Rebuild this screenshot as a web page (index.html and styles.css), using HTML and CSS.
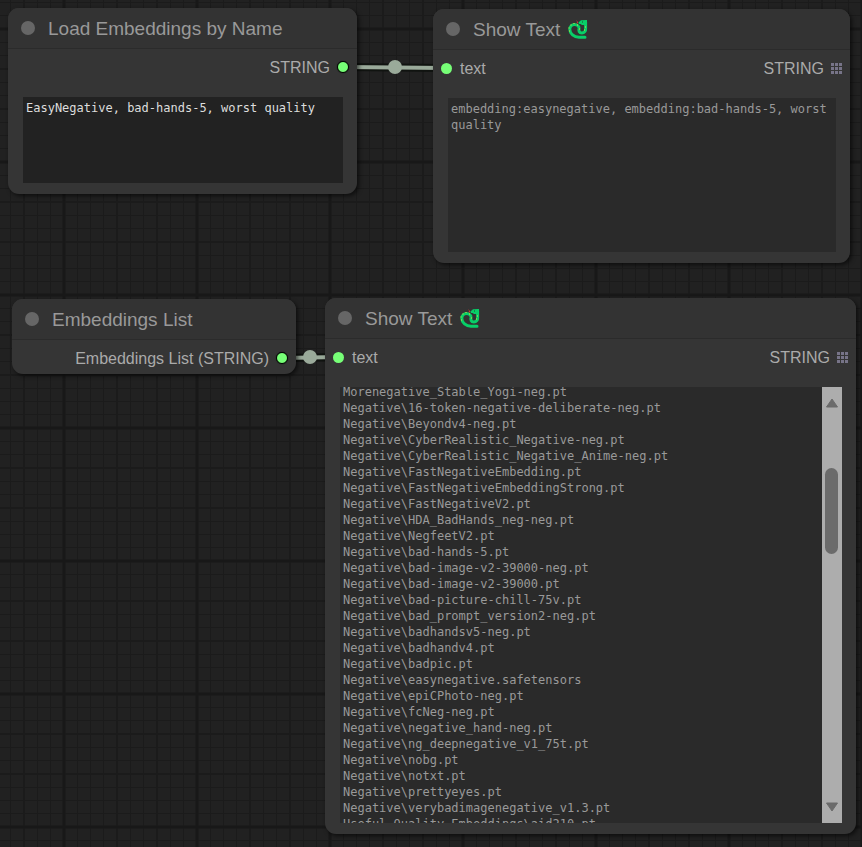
FILE: index.html
```html
<!DOCTYPE html>
<html lang="en">
<head>
<meta charset="utf-8">
<meta name="viewport" content="width=device-width, initial-scale=1">
<title>Embeddings workflow</title>
<link rel="stylesheet" href="styles.css">
</head>
<body>
<main class="canvas">
  <svg class="layer" aria-hidden="true">
    <defs>
      <pattern id="grid" x="64" y="29" width="133" height="133" patternUnits="userSpaceOnUse">
        <path class="grid-minor" d="M13.5 0v133M26.5 0v133M39.5 0v133M66.5 0v133M79.5 0v133M106.5 0v133M119.5 0v133M0 13.5h133M0 26.5h133M0 53.5h133M0 66.5h133M0 93.5h133M0 106.5h133M0 119.5h133"/>
        <path class="grid-medium" d="M53 0v133M93 0v133M0 40h133M0 80h133"/>
        <path class="grid-major" d="M0 0v133M133 0v133M0 0h133M0 133h133"/>
      </pattern>
      <symbol id="snake" viewBox="0 0 20 20">
        <path class="snake-body" d="M17 18.200H11C6 18.200 1.800 14.500 1.800 10.500C1.800 7.500 4 5.500 6.500 5.500C9.500 5.500 11.200 7.500 11 9.500C10.500 11.500 11 14 13.800 14C16.500 14 17.800 12 17.600 9.500V3"/>
        <path class="snake-head" d="M19 1v5h-5l-1.500-1H11l-.6-1.500L13 1.300z"/>
        <path class="snake-tongue" d="M8.600 2l1.200 1.200-1 .8 1.200-.5"/>
        <path class="snake-spots" d="M1 12h1M.5 9h1M2.500 6h1M5.500 4.500h1M9 6h1M11 10h1M16 11h1M17 8h1"/>
        <path class="snake-eye" d="M14 3h1"/>
      </symbol>
      <symbol id="dots" viewBox="0 0 11 11">
        <path class="dots-fill" d="M0 0h3v3H0zM4 0h3v3H4zM8 0h3v3H8zM0 4h3v3H0zM4 4h3v3H4zM8 4h3v3H8zM0 8h3v3H0zM4 8h3v3H4zM8 8h3v3H8z"/>
      </symbol>
    </defs>
    <rect width="100%" height="100%" fill="url(#grid)"/>
    <path class="link-edge" d="M344 67L446 68M283 358L339 357"/>
    <path class="link" d="M344 67L446 68M283 358L339 357"/>
    <circle class="link-knob" cx="395" cy="67" r="7"/>
    <circle class="link-knob" cx="310" cy="357" r="7"/>
  </svg>

  <section class="node node-load">
    <header class="node-header"><span class="node-dot"></span><h2 class="node-title">Load Embeddings by Name</h2></header>
    <div class="slots"><span class="slot slot-out"><span class="slot-label">STRING</span><span class="port port-linked"></span></span></div>
    <div class="field"><textarea class="text text-edit" aria-label="Embedding names" spellcheck="false">EasyNegative, bad-hands-5, worst quality</textarea></div>
  </section>

  <section class="node node-show">
    <header class="node-header"><span class="node-dot"></span><h2 class="node-title">Show Text</h2><svg class="snake" aria-hidden="true"><use href="#snake"/></svg></header>
    <div class="slots">
      <span class="slot"><span class="port"></span><span class="slot-label">text</span></span>
      <span class="slot slot-out"><span class="slot-label">STRING</span><svg class="dots" aria-hidden="true"><use href="#dots"/></svg></span>
    </div>
    <div class="field"><textarea class="text" aria-label="Resolved embeddings" readonly>embedding:easynegative, embedding:bad-hands-5, worst quality</textarea></div>
  </section>

  <section class="node node-list">
    <header class="node-header"><span class="node-dot"></span><h2 class="node-title">Embeddings List</h2></header>
    <div class="slots"><span class="slot slot-out"><span class="slot-label">Embeddings List (STRING)</span><span class="port port-linked"></span></span></div>
  </section>

  <section class="node node-files">
    <header class="node-header"><span class="node-dot"></span><h2 class="node-title">Show Text</h2><svg class="snake" aria-hidden="true"><use href="#snake"/></svg></header>
    <div class="slots">
      <span class="slot"><span class="port"></span><span class="slot-label">text</span></span>
      <span class="slot slot-out"><span class="slot-label">STRING</span><svg class="dots" aria-hidden="true"><use href="#dots"/></svg></span>
    </div>
    <div class="field">
      <textarea class="text text-files" id="files" aria-label="Embedding files" readonly wrap="off">Morenegative_Stable_Yogi-neg.pt
Negative\16-token-negative-deliberate-neg.pt
Negative\Beyondv4-neg.pt
Negative\CyberRealistic_Negative-neg.pt
Negative\CyberRealistic_Negative_Anime-neg.pt
Negative\FastNegativeEmbedding.pt
Negative\FastNegativeEmbeddingStrong.pt
Negative\FastNegativeV2.pt
Negative\HDA_BadHands_neg-neg.pt
Negative\NegfeetV2.pt
Negative\bad-hands-5.pt
Negative\bad-image-v2-39000-neg.pt
Negative\bad-image-v2-39000.pt
Negative\bad-picture-chill-75v.pt
Negative\bad_prompt_version2-neg.pt
Negative\badhandsv5-neg.pt
Negative\badhandv4.pt
Negative\badpic.pt
Negative\easynegative.safetensors
Negative\epiCPhoto-neg.pt
Negative\fcNeg-neg.pt
Negative\negative_hand-neg.pt
Negative\ng_deepnegative_v1_75t.pt
Negative\nobg.pt
Negative\notxt.pt
Negative\prettyeyes.pt
Negative\verybadimagenegative_v1.3.pt
Useful_Quality_Embeddings\aid210.pt</textarea>
      <div class="scrollbar" aria-hidden="true">
        <svg class="arrow" viewBox="0 0 12 10"><path d="M6 1L11.500 9H.5z"/></svg>
        <div class="track"><div class="thumb"></div></div>
        <svg class="arrow" viewBox="0 0 12 10"><path d="M6 9L11.500 1H.5z"/></svg>
      </div>
    </div>
  </section>
</main>
<script src="script.js"></script>
</body>
</html>
```

FILE: styles.css
```css
* {
  box-sizing: border-box;
}

body {
  margin: 0;
  background: #212121;
  font-family: "Liberation Sans", Arial, sans-serif;
}

.canvas {
  position: relative;
  height: 100vh;
  overflow: hidden;
}

.layer {
  position: absolute;
  inset: 0;
  width: 100%;
  height: 100%;
}

.grid-minor {
  stroke: #1b1b1b;
  stroke-width: 1;
}

.grid-medium {
  stroke: #1b1b1b;
  stroke-width: 2;
}

.grid-major {
  stroke: #181818;
  stroke-width: 3;
}

.link-edge {
  stroke: #101310;
  stroke-width: 8;
}

.link {
  stroke: #9aaa9a;
  stroke-width: 4;
}

.link-knob {
  fill: #9aaa9a;
}

/* Nodes sit freely on the canvas */
.node {
  position: absolute;
  display: flex;
  flex-direction: column;
  border-radius: 11px;
  background: #353535;
  box-shadow: 2px 2px 4px rgba(0, 0, 0, 0.6);
}

.node-load {
  left: 8px;
  top: 8px;
  width: 349px;
  height: 186px;
}

.node-show {
  left: 433px;
  top: 9px;
  width: 417px;
  height: 254px;
}

.node-list {
  left: 12px;
  top: 299px;
  width: 284px;
}

.node-files {
  left: 325px;
  top: 298px;
  width: 531px;
  height: 536px;
}

.node-header {
  display: flex;
  align-items: center;
  height: 41px;
  padding-left: 13px;
  border-bottom: 1px solid #2b2b2b;
  border-radius: 11px 11px 0 0;
  background: #333333;
}

.node-dot {
  width: 14px;
  height: 14px;
  margin-right: 13px;
  border-radius: 50%;
  background: #666666;
}

.node-title {
  margin: 0;
  padding-top: 2px;
  font-size: 19px;
  font-weight: 400;
  line-height: 24px;
  color: #999999;
}

.snake {
  width: 20px;
  height: 20px;
  margin-left: 8px;
}

.snake-body {
  fill: none;
  stroke: #08cf68;
  stroke-width: 3;
  stroke-linecap: round;
}

.snake-head {
  fill: #08cf68;
}

.snake-tongue {
  fill: none;
  stroke: #d8363c;
}

.snake-spots {
  stroke: #e5d736;
}

.snake-eye {
  stroke: #14532d;
}

.slots {
  display: flex;
  align-items: center;
  height: 34px;
  padding: 2px 8px 0;
}

.slot {
  display: flex;
  align-items: center;
  gap: 8px;
}

.slot-out {
  gap: 7px;
  margin-left: auto;
}

.slot-label {
  padding-top: 2px;
  font-size: 16px;
  line-height: 20px;
  color: #aaaaaa;
}

.port {
  width: 11px;
  height: 11px;
  border-radius: 50%;
  background: #77ff77;
}

.port-linked {
  width: 12px;
  height: 12px;
  border: 1px solid #000000;
  box-shadow: 0 0 1px #000000;
}

.dots {
  width: 11px;
  height: 11px;
}

.dots-fill {
  fill: #777488;
}

.field {
  display: flex;
  flex: 1;
  min-height: 0;
  padding: 14px 14px 11px 15px;
}

.text {
  flex: 1;
  min-width: 0;
  padding: 3px;
  border: 0;
  outline: 0;
  resize: none;
  overflow: hidden;
  background: #2a2a2a;
  color: #999999;
  font-family: "DejaVu Sans Mono", monospace;
  font-size: 12px;
  line-height: 16px;
}

.text-edit {
  background: #222222;
  color: #dddddd;
}

.text-files {
  white-space: pre;
}

.scrollbar {
  display: flex;
  flex-direction: column;
  align-items: center;
  width: 20px;
  padding: 11px 1px 11px 0;
  background: #adadad;
}

.arrow {
  width: 12px;
  height: 10px;
  fill: #6b6b6b;
  stroke: #6b6b6b;
  stroke-linejoin: round;
}

.track {
  flex: 1;
  width: 13px;
  padding-top: 60px;
}

.thumb {
  height: 86px;
  border-radius: 7px;
  background: #6b6b6b;
}
```

FILE: script.js
```js
// Start the file list slightly scrolled.
document.getElementById("files").scrollTop = 6;
```
